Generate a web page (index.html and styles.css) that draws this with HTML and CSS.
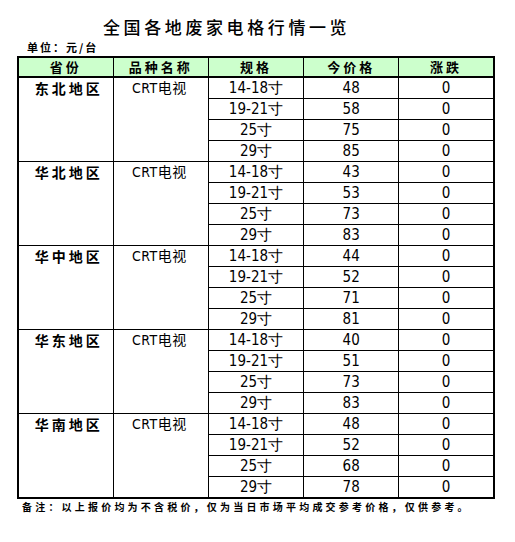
FILE: index.html
```html
<!DOCTYPE html>
<html lang="zh">
<head>
<meta charset="utf-8">
<link rel="stylesheet" href="styles.css">
</head>
<body>
<div class="page">
  <h1 class="title">全国各地废家电格行情一览</h1>
  <div class="unit">单位：元/台</div>
  <table class="grid">
    <thead>
      <tr><th>省份</th><th>品种名称</th><th>规格</th><th>今价格</th><th>涨跌</th></tr>
    </thead>
    <tbody>
      <tr><td class="region" rowspan="4">东北地区</td><td class="kind" rowspan="4">CRT电视</td><td class="num">14-18寸</td><td class="num">48</td><td class="num">0</td></tr>
      <tr><td class="num">19-21寸</td><td class="num">58</td><td class="num">0</td></tr>
      <tr><td class="num">25寸</td><td class="num">75</td><td class="num">0</td></tr>
      <tr><td class="num">29寸</td><td class="num">85</td><td class="num">0</td></tr>

      <tr><td class="region" rowspan="4">华北地区</td><td class="kind" rowspan="4">CRT电视</td><td class="num">14-18寸</td><td class="num">43</td><td class="num">0</td></tr>
      <tr><td class="num">19-21寸</td><td class="num">53</td><td class="num">0</td></tr>
      <tr><td class="num">25寸</td><td class="num">73</td><td class="num">0</td></tr>
      <tr><td class="num">29寸</td><td class="num">83</td><td class="num">0</td></tr>

      <tr><td class="region" rowspan="4">华中地区</td><td class="kind" rowspan="4">CRT电视</td><td class="num">14-18寸</td><td class="num">44</td><td class="num">0</td></tr>
      <tr><td class="num">19-21寸</td><td class="num">52</td><td class="num">0</td></tr>
      <tr><td class="num">25寸</td><td class="num">71</td><td class="num">0</td></tr>
      <tr><td class="num">29寸</td><td class="num">81</td><td class="num">0</td></tr>

      <tr><td class="region" rowspan="4">华东地区</td><td class="kind" rowspan="4">CRT电视</td><td class="num">14-18寸</td><td class="num">40</td><td class="num">0</td></tr>
      <tr><td class="num">19-21寸</td><td class="num">51</td><td class="num">0</td></tr>
      <tr><td class="num">25寸</td><td class="num">73</td><td class="num">0</td></tr>
      <tr><td class="num">29寸</td><td class="num">83</td><td class="num">0</td></tr>

      <tr><td class="region" rowspan="4">华南地区</td><td class="kind" rowspan="4">CRT电视</td><td class="num">14-18寸</td><td class="num">48</td><td class="num">0</td></tr>
      <tr><td class="num">19-21寸</td><td class="num">52</td><td class="num">0</td></tr>
      <tr><td class="num">25寸</td><td class="num">68</td><td class="num">0</td></tr>
      <tr><td class="num">29寸</td><td class="num">78</td><td class="num">0</td></tr>
    </tbody>
  </table>
  <p class="note">备注：以上报价均为不含税价，仅为当日市场平均成交参考价格，仅供参考。</p>
</div>
</body>
</html>
```

FILE: styles.css
```css
html, body {
  margin: 0;
  padding: 0;
  background: #ffffff;
  color: #000000;
}

.page {
  width: 515px;
  height: 542px;
  padding: 0 0 0 17px;
  box-sizing: border-box;
  font-family: "Noto Sans CJK SC", "Noto Sans CJK JP", sans-serif;
}

.title {
  margin: 0;
  padding: 15px 0 0 86px;
  height: 23px;
  font-size: 17px;
  line-height: 23px;
  font-weight: 500;
  letter-spacing: 3.6px;
}

.unit {
  margin: 0;
  padding-left: 10px;
  height: 18px;
  font-size: 11px;
  line-height: 18px;
  font-weight: 700;
  letter-spacing: 2px;
}

.grid {
  border-collapse: collapse;
  width: 478px;
  table-layout: fixed;
  border: 2px solid #000000;
}

.grid th,
.grid td {
  border: 1px solid #000000;
  padding: 0;
  height: 20px;
  text-align: center;
  vertical-align: middle;
}

.grid th {
  height: 18px;
  background: #ccffcc;
  font-size: 13px;
  line-height: 18px;
  font-weight: 700;
  letter-spacing: 3px;
  border-bottom: 2px solid #000000;
}

.grid td.num {
  font-family: "Liberation Sans Narrow", "DejaVu Sans Condensed", "Liberation Sans", sans-serif;
  font-size: 15px;
  line-height: 19px;
}

.grid td.region {
  vertical-align: top;
  padding-left: 6px;
  font-size: 14px;
  line-height: 20px;
  font-weight: 700;
  letter-spacing: 3px;
}

.grid td.kind {
  vertical-align: top;
  padding-right: 3px;
  font-family: "Liberation Sans Narrow", "DejaVu Sans Condensed", "Noto Sans CJK SC", sans-serif;
  font-size: 14px;
  line-height: 20px;
  letter-spacing: 0.5px;
}

.note {
  margin: 1px 0 0 5px;
  font-size: 10px;
  line-height: 14px;
  font-weight: 700;
  letter-spacing: 3.2px;
}
```
